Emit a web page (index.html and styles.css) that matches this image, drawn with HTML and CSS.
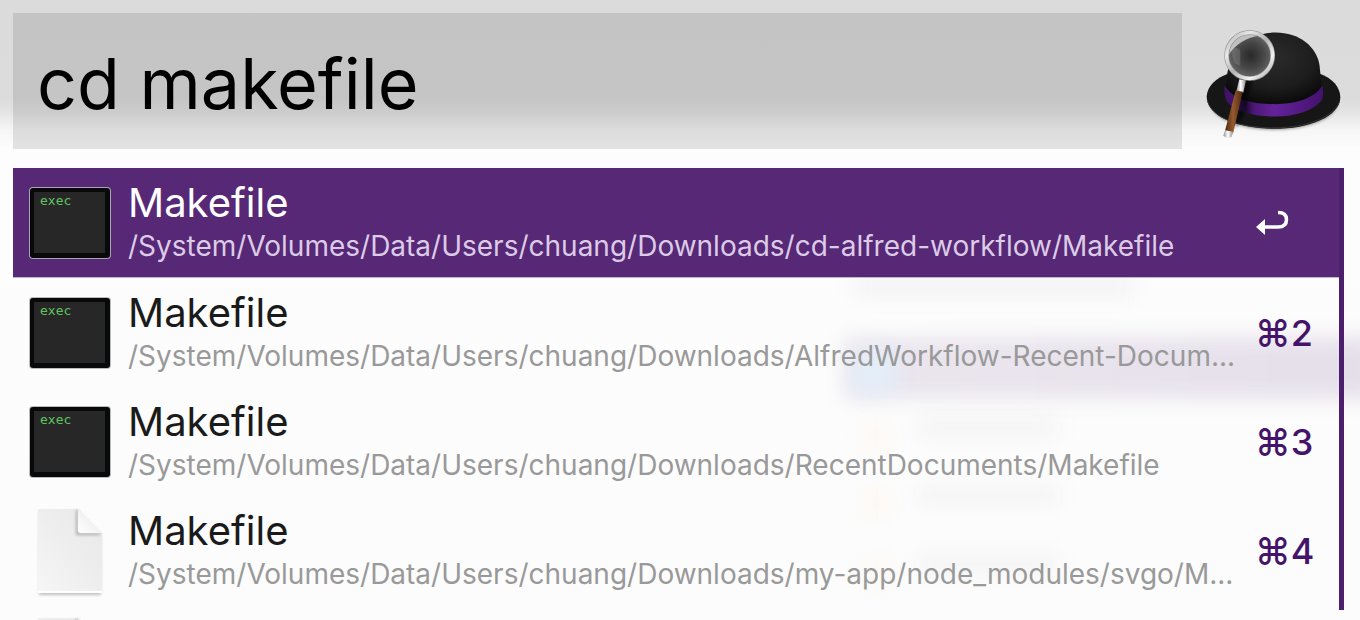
FILE: index.html
```html
<!DOCTYPE html>
<html lang="en">
<head>
<meta charset="utf-8">
<title>Alfred</title>
<link rel="stylesheet" href="styles.css">
</head>
<body>
<svg class="defs" aria-hidden="true">
  <defs>
    <linearGradient id="page" x1="0" y1="1" x2="1" y2="0"><stop offset="0" stop-color="#f6f6f6"/><stop offset=".5" stop-color="#eeeeee"/><stop offset="1" stop-color="#e8e8e8"/></linearGradient>
    <linearGradient id="fold" x1="0" y1="1" x2="1" y2="0"><stop offset="0" stop-color="#fff"/><stop offset=".5" stop-color="#f2f2f2"/><stop offset="1" stop-color="#ddd"/></linearGradient>
    <filter id="soft" x="-30%" y="-30%" width="160%" height="160%"><feGaussianBlur stdDeviation="1.5"/></filter>
  </defs>
  <symbol id="terminal" viewBox="0 0 84 74">
    <rect class="frame" x="1" y="1" width="82" height="72" rx="4"/>
    <rect x="2" y="2" width="80" height="70" rx="3" fill="#08090a"/>
    <rect x="6" y="6" width="71" height="61" fill="#272727"/>
  </symbol>
  <symbol id="document" viewBox="0 -3 68 93">
    <path d="M3 4h39l23 24v60H3z" fill="#999" opacity=".6" filter="url(#soft)"/>
    <path d="M2 2h40l24 24v60H2z" fill="url(#page)"/>
    <path d="M2 85h64" stroke="#fff" stroke-width="2"/>
    <path d="M41 3v24h23" fill="none" stroke="#888" stroke-width="2" opacity=".7" filter="url(#soft)"/>
    <path d="M42 2l24 24H45q-3 0-3-3z" fill="url(#fold)"/>
  </symbol>
</svg>

<div class="haze" aria-hidden="true">
  <i class="smudge smudge-a"></i><i class="smudge smudge-b"></i><i class="smudge smudge-c"></i><i class="smudge smudge-d"></i>
  <i class="band"></i><i class="glow"></i><i class="spark spark-a"></i><i class="spark spark-b"></i><i class="spark spark-c"></i>
</div>

<main class="launcher">
  <header class="search">
    <input class="query" type="text" value="cd makefile" aria-label="Search" spellcheck="false">
    <svg class="hat" viewBox="78 88 408 332" role="img" aria-label="Alfred">
      <defs>
        <radialGradient id="dome" cx=".5" cy=".35" r=".65"><stop offset="0" stop-color="#2b2b2b"/><stop offset=".65" stop-color="#1d1d1d"/><stop offset="1" stop-color="#0b0b0b"/></radialGradient>
        <linearGradient id="ribbon"><stop offset="0" stop-color="#3f1266"/><stop offset=".14" stop-color="#481474"/><stop offset=".22" stop-color="#220b38"/><stop offset=".3" stop-color="#4c1878"/><stop offset=".5" stop-color="#642298"/><stop offset=".75" stop-color="#551a85"/><stop offset="1" stop-color="#42126b"/></linearGradient>
        <radialGradient id="lens" cx=".52" cy=".5" r=".6"><stop offset="0" stop-color="#292929"/><stop offset=".5" stop-color="#484848"/><stop offset="1" stop-color="#777"/></radialGradient>
        <linearGradient id="rim" x1="0" y1="0" x2="1" y2="1"><stop offset="0" stop-color="#aaa"/><stop offset=".25" stop-color="#e8e8e8"/><stop offset=".5" stop-color="#b4b4b4"/><stop offset=".75" stop-color="#f2f2f2"/><stop offset="1" stop-color="#999"/></linearGradient>
        <linearGradient id="wood"><stop offset="0" stop-color="#4c2a13"/><stop offset=".45" stop-color="#95592b"/><stop offset="1" stop-color="#4c2811"/></linearGradient>
        <linearGradient id="steel"><stop offset="0" stop-color="#8c8c8c"/><stop offset=".45" stop-color="#fff"/><stop offset="1" stop-color="#888"/></linearGradient>
        <filter id="shade" x="-20%" y="-20%" width="140%" height="140%"><feGaussianBlur stdDeviation="4"/></filter>
      </defs>
      <ellipse cx="282" cy="308" rx="190" ry="82" fill="#000" opacity=".4" filter="url(#shade)"/>
      <path d="M80 290C82 258 108 235 145 221L418 221C458 235 480 262 481 292C481 350 386 387 282 387C176 387 80 350 80 290z" fill="#161616"/>
      <path d="M83 305C100 360 190 384 282 384C382 384 462 350 478 306" fill="none" stroke="#353535" stroke-width="3"/>
      <path d="M137 262C139 214 150 168 190 130C216 106 250 99 285 98C355 97 412 139 419 200L425 262Q390 312 282 312Q170 312 137 262z" fill="url(#dome)"/>
      <path d="M134 257C158 298 212 313 285 313C350 313 402 296 427 258C431 274 430 291 425 302C399 332 350 350 282 350C215 350 157 332 139 302C134 290 132 274 134 257z" fill="url(#ribbon)"/>
      <path d="M218 240L190 350L166 386L190 240z" fill="#000" opacity=".5" filter="url(#shade)"/>
      <path d="M178 238L198 241L190 278L169 274z" fill="url(#steel)"/>
      <path d="M167 272L188 276L160 398L135 393z" fill="url(#wood)"/>
      <path d="M135 391L160 396L155 411Q143 421 130 408z" fill="url(#steel)"/>
      <circle cx="209" cy="167" r="68" fill="url(#lens)"/>
      <path d="M147 163Q150 112 205 101Q243 104 236 108Q180 117 147 163z" fill="#d9d9d9" opacity=".8"/>
      <path d="M157 148Q170 140 181 151V198L165 191Q155 174 157 148z" fill="#aaa" opacity=".25"/>
      <circle cx="209" cy="167" r="69" fill="none" stroke="#8a8a8a" stroke-width="14"/>
      <circle cx="209" cy="167" r="69" fill="none" stroke="url(#rim)" stroke-width="11"/>
    </svg>
  </header>

  <section class="results">
    <ul class="list">
      <li class="row selected">
        <span class="icon"><svg class="terminal" aria-hidden="true"><use href="#terminal"/></svg><span class="tag">exec</span></span>
        <div class="text"><div class="title">Makefile</div><div class="path">/System/Volumes/Data/Users/chuang/Downloads/cd-alfred-workflow/Makefile</div></div>
        <svg class="return" viewBox="0 0 33 26" role="img" aria-label="Return"><path d="M22 2.500C28 2.500 30.500 5.500 30.500 9.500C30.500 14 28 17 22 17H8" fill="none" stroke="#fff" stroke-width="3.500"/><path d="M0 17L9 9V25z" fill="#fff"/></svg>
      </li>
      <li class="row">
        <span class="icon"><svg class="terminal" aria-hidden="true"><use href="#terminal"/></svg><span class="tag">exec</span></span>
        <div class="text"><div class="title">Makefile</div><div class="path">/System/Volumes/Data/Users/chuang/Downloads/AlfredWorkflow-Recent-Docum...</div></div>
        <kbd class="key">⌘2</kbd>
      </li>
      <li class="row">
        <span class="icon"><svg class="terminal" aria-hidden="true"><use href="#terminal"/></svg><span class="tag">exec</span></span>
        <div class="text"><div class="title">Makefile</div><div class="path">/System/Volumes/Data/Users/chuang/Downloads/RecentDocuments/Makefile</div></div>
        <kbd class="key">⌘3</kbd>
      </li>
      <li class="row">
        <span class="icon"><svg class="document" aria-hidden="true"><use href="#document"/></svg></span>
        <div class="text"><div class="title">Makefile</div><div class="path">/System/Volumes/Data/Users/chuang/Downloads/my-app/node_modules/svgo/M...</div></div>
        <kbd class="key">⌘4</kbd>
      </li>
      <li class="row">
        <span class="icon"><svg class="document" aria-hidden="true"><use href="#document"/></svg></span>
      </li>
    </ul>
    <div class="scrollbar"></div>
  </section>
</main>
</body>
</html>
```

FILE: styles.css
```css
* { box-sizing: border-box; }

body {
  margin: 0;
  height: 100vh;
  overflow: hidden;
  position: relative;
  font-family: Inter, "Liberation Sans", sans-serif;
  color: #1a1a1a;
  background: linear-gradient(#dbdbdb 0, #dcdcdc 98px, #e4e4e4 112px, #f6f6f6 130px, #fdfdfd 148px, #fcfcfc 100%);
}

.defs { position: absolute; width: 0; height: 0; }

/* Blurred desktop showing through the window */
.haze { position: absolute; inset: 0; overflow: hidden; }
.haze i { position: absolute; filter: blur(10px); }
.smudge { background: #f3f3f3; }
.smudge-a { left: 855px; top: 276px; width: 280px; height: 22px; }
.smudge-b { left: 918px; top: 418px; width: 140px; height: 18px; }
.smudge-c { left: 918px; top: 486px; width: 140px; height: 18px; }
.smudge-d { left: 918px; top: 556px; width: 140px; height: 18px; }
.haze .band { left: 844px; right: -20px; top: 337px; height: 62px; background: linear-gradient(90deg, #ebe6ee, #e5dfea); }
.haze .glow { left: 852px; top: 350px; width: 44px; height: 42px; background: #e2eef9; }
.spark { background: #fdf7f2; width: 26px; height: 26px; left: 864px; }
.spark-a { top: 422px; }
.spark-b { top: 490px; }
.spark-c { top: 560px; }

.launcher {
  position: relative;
  height: 100%;
  display: flex;
  flex-direction: column;
  gap: 19px;
  padding: 13px 16px 0 13px;
}

.search { display: flex; align-items: center; gap: 24px; padding-right: 2px; }

.query {
  flex: 1;
  min-width: 0;
  height: 136px;
  padding: 4px 24px 0;
  border: 0;
  border-radius: 0;
  outline: 0;
  background: rgba(0, 0, 0, 0.1);
  color: #000;
  font: 400 70px/92px Inter, "Liberation Sans", sans-serif;
}

.hat { flex: none; width: 136px; height: 111px; margin-top: 6px; }

.results { flex: 1; min-height: 0; display: flex; overflow: hidden; }
.list { flex: 1; min-width: 0; margin: 0; padding: 0; list-style: none; }

.row { display: flex; align-items: center; height: 109px; padding: 0 28px 0 15px; }
.selected { height: 110px; background: #562876; border-bottom: 1px solid #c4b6cf; color: #fff; }

.icon { flex: none; position: relative; width: 84px; display: flex; justify-content: center; margin-right: 16px; }
.terminal { width: 84px; height: 74px; fill: #bbb; }
.selected .terminal { fill: #aaa4b2; }
.document { width: 68px; height: 93px; }
.tag { position: absolute; left: 12px; top: 7px; font: 13px/16px "DejaVu Sans Mono", monospace; color: #5fc45f; }

.text { flex: 1; min-width: 0; padding-bottom: 2px; white-space: nowrap; }
.title { font-size: 40px; line-height: 48px; }
.path { font-size: 28px; line-height: 38px; color: #999; }
.selected .path { color: #dccbe6; }

.key { flex: none; width: 56px; font: 500 36px/48px Inter, "DejaVu Sans", sans-serif; color: #44146a; }
.return { flex: none; width: 33px; height: 26px; margin-right: 22px; }

.scrollbar { width: 5px; margin-bottom: 10px; background: #4c1f6c; }
```
